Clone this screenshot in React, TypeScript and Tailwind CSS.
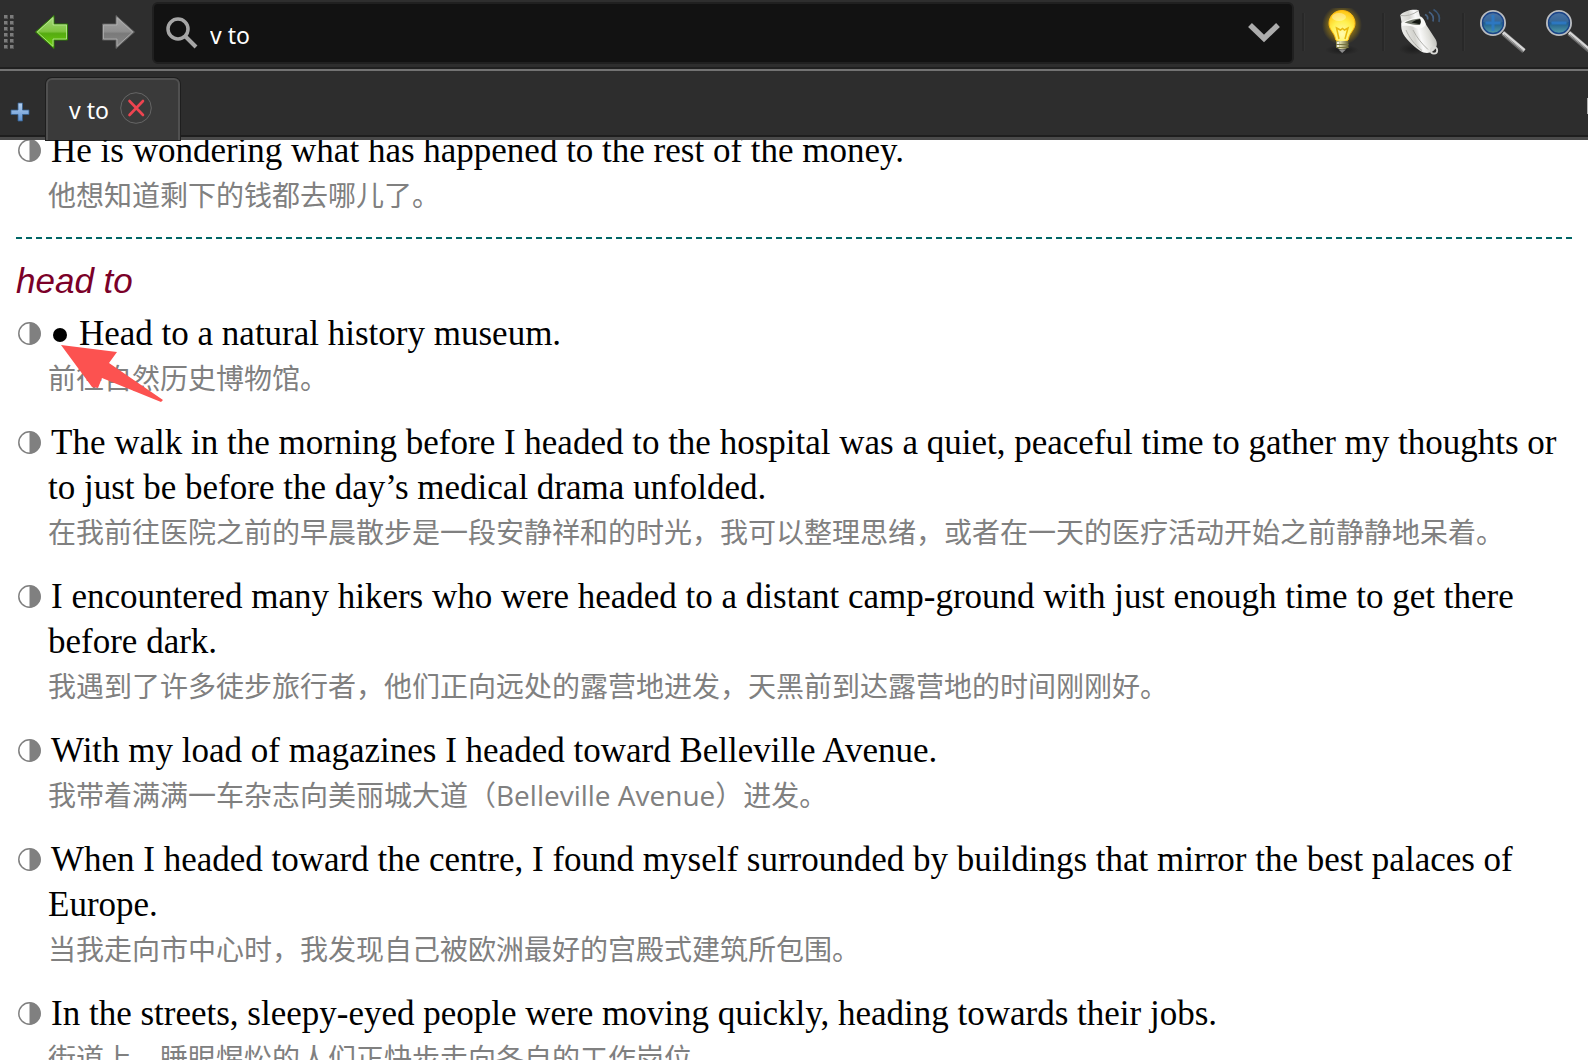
import React, { useState } from 'react';

interface Example {
  en: string;
  zh: string;
  marked?: boolean;
}

const previousExample: Example = {
  en: 'He is wondering what has happened to the rest of the money.',
  zh: '他想知道剩下的钱都去哪儿了。',
};

const examples: Example[] = [
  { en: 'Head to a natural history museum.', zh: '前往自然历史博物馆。', marked: true },
  {
    en: 'The walk in the morning before I headed to the hospital was a quiet, peaceful time to gather my thoughts or to just be before the day’s medical drama unfolded.',
    zh: '在我前往医院之前的早晨散步是一段安静祥和的时光，我可以整理思绪，或者在一天的医疗活动开始之前静静地呆着。',
  },
  {
    en: 'I encountered many hikers who were headed to a distant camp-ground with just enough time to get there before dark.',
    zh: '我遇到了许多徒步旅行者，他们正向远处的露营地进发，天黑前到达露营地的时间刚刚好。',
  },
  {
    en: 'With my load of magazines I headed toward Belleville Avenue.',
    zh: '我带着满满一车杂志向美丽城大道（Belleville Avenue）进发。',
  },
  {
    en: 'When I headed toward the centre, I found myself surrounded by buildings that mirror the best palaces of Europe.',
    zh: '当我走向市中心时，我发现自己被欧洲最好的宫殿式建筑所包围。',
  },
  {
    en: 'In the streets, sleepy-eyed people were moving quickly, heading towards their jobs.',
    zh: '街道上，睡眼惺忪的人们正快步走向各自的工作岗位。',
  },
];

// Toolbar handle: two columns of dots
const Grip: React.FC = () => (
  <div className="grid shrink-0 grid-cols-2 gap-[2px]">
    {Array.from({ length: 12 }, (_, i) => (
      <span key={i} className="h-1 w-1 border-r border-b border-[#555] bg-[#7c7c7c]" />
    ))}
  </div>
);

const ArrowIcon: React.FC<{ direction: 'back' | 'forward' }> = ({ direction }) => {
  const back = direction === 'back';
  const id = `arrow-${direction}`;
  return (
    <svg width="36" height="36" viewBox="0 0 36 36" className={back ? '' : '-scale-x-100'}>
      <defs>
        <linearGradient id={id} x1="0" y1="0" x2="0" y2="1">
          <stop offset="0" stopColor={back ? '#a9db80' : '#a6a6a6'} />
          <stop offset="0.48" stopColor={back ? '#7fc440' : '#8f8f8f'} />
          <stop offset="0.55" stopColor={back ? '#55ab10' : '#7a7a7a'} />
          <stop offset="1" stopColor={back ? '#6fd20c' : '#8a8a8a'} />
        </linearGradient>
      </defs>
      <path
        d="M1.5 18 20 1.5V10h13.500v16H20v8.500z"
        fill={`url(#${id})`}
        stroke={back ? '#2f7d06' : '#5c5c5c'}
        strokeWidth="1"
      />
      <path
        d="M3.300 18 19 3.700V11h13.500v14H19v7.300z"
        fill="none"
        stroke={back ? '#b9e695' : '#b0b0b0'}
        strokeOpacity="0.8"
        strokeWidth="1"
      />
    </svg>
  );
};

const SearchIcon: React.FC = () => (
  <svg width="32" height="32" viewBox="0 0 32 32" fill="none" stroke="#a6a6a6">
    <circle cx="12" cy="12" r="10" strokeWidth="3.500" />
    <path d="M19 19 30 30" strokeWidth="4" />
  </svg>
);

const ChevronIcon: React.FC = () => (
  <svg width="32" height="21" viewBox="0 0 32 21" fill="none" stroke="#acacac">
    <path d="M2 2 16 15.500 30 2" strokeWidth="5.500" />
  </svg>
);

const BulbIcon: React.FC = () => (
  <svg width="48" height="48" viewBox="0 0 48 48">
    <defs>
      <radialGradient id="bulb-glow">
        <stop offset="0.6" stopColor="#d8a800" stopOpacity="0.5" />
        <stop offset="1" stopColor="#d8a800" stopOpacity="0" />
      </radialGradient>
      <radialGradient id="bulb-shadow">
        <stop offset="0" stopColor="#161616" stopOpacity="0.8" />
        <stop offset="1" stopColor="#161616" stopOpacity="0" />
      </radialGradient>
      <radialGradient id="bulb-glass" cx="0.5" cy="0.75" r="0.75">
        <stop offset="0" stopColor="#fffbb0" />
        <stop offset="0.55" stopColor="#fff04e" />
        <stop offset="1" stopColor="#ffc414" />
      </radialGradient>
      <linearGradient id="bulb-base">
        <stop offset="0" stopColor="#8d8a4e" />
        <stop offset="0.35" stopColor="#dad7a8" />
        <stop offset="1" stopColor="#625f33" />
      </linearGradient>
    </defs>
    <ellipse cx="24" cy="42" rx="17" ry="5" fill="url(#bulb-shadow)" />
    <circle cx="24" cy="17" r="20" fill="url(#bulb-glow)" />
    <path
      d="M24 2.500c-7.700 0-13 5.800-13 13 0 6.500 5.500 9 6.500 15.500.3 2 2.500 2.500 6.500 2.500s6.200-.5 6.500-2.500C31.500 24.500 37 22 37 15.500c0-7.200-5.300-13-13-13z"
      fill="url(#bulb-glass)"
      stroke="#ffbc10"
      strokeWidth="1"
    />
    <ellipse cx="21" cy="9" rx="7" ry="4" fill="#fff" fillOpacity="0.35" />
    <path d="M21 31 18.500 20l4 2 2-1.500 2 1.500 3.500-2L27 31" fill="none" stroke="#e8b90c" strokeWidth="1.500" />
    <path d="M18 33h12.500v6.500q-6 4-12.500 0z" fill="url(#bulb-base)" />
    <path d="M18 36.500h12.500M18 39.500h12.500" stroke="#77743f" strokeWidth="1" />
    <path d="M20 34v6" stroke="#fff" strokeWidth="1.500" strokeDasharray="2 1" />
    <path d="M20.500 41.500h7.500l-3.800 3.500z" fill="#8c8c8c" />
  </svg>
);

const WhistleIcon: React.FC = () => (
  <svg width="48" height="48" viewBox="0 0 48 48">
    <defs>
      <linearGradient id="whistle-body" x1="0" y1="0.6" x2="1" y2="0.3">
        <stop offset="0" stopColor="#f4f4f2" />
        <stop offset="0.35" stopColor="#d3d3ce" />
        <stop offset="0.5" stopColor="#fafafa" />
        <stop offset="0.72" stopColor="#deded9" />
        <stop offset="1" stopColor="#a9a9a4" />
      </linearGradient>
      <radialGradient id="whistle-shadow">
        <stop offset="0" stopColor="#161616" stopOpacity="0.7" />
        <stop offset="1" stopColor="#161616" stopOpacity="0" />
      </radialGradient>
    </defs>
    <ellipse cx="15" cy="41" rx="14" ry="6" fill="url(#whistle-shadow)" />
    <path
      d="M2.300 7C6 3 15 .8 20.500 2.300l1.500 6c3.500 1.200 5 5 6.300 8.700l9.400 14.500c2.500 4.500.8 9.500-3.200 12-3.500 2-8.500 2-12.500-.8C14.500 37.500 6.500 30 4.200 23.500 3 20 3 16.500 3.500 14z"
      fill="url(#whistle-body)"
    />
    <path d="M3.500 15c5-3 13-5.500 18.500-6 3.500 1.500 5.500 4.500 5.500 8.500-3.500 3.500-8.500 4-12 1.200-3.500-1.200-7.500-1.200-11.500-.7z" fill="#fafaf8" />
    <path d="M2.500 7.500q9 1.500 18-4.800" fill="none" stroke="#b3b3ae" strokeWidth="1" />
    <path d="M6.500 14.500c4.500-2.300 10.500-3.800 15.500-4 1.200 1.700 1.200 4.500 0 6.300-4.500 1-9-.8-15.500-2.300z" fill="#70756a" />
    <path d="M13.500 14.500q4-3 8.500-3.500 1.500 3-.2 5.300z" fill="#161a14" />
    <path d="M8 22c3.500 8 8.500 14.500 16 20.500M15 22c3.500 7 8.500 13.500 15 19.500" fill="none" stroke="#b0b0ab" strokeWidth="1" />
    <circle cx="36" cy="42.500" r="3.200" fill="none" stroke="#d9d9d6" strokeWidth="1.800" />
    <g fill="none" strokeWidth="1.700">
      <path d="M27 6.500q3.500 1.500 2.500 5" stroke="#4a6482" />
      <path d="M31 4q5.500 3 4 9.500" stroke="#466183" />
      <path d="M35.500 1.500q7.500 4.500 5.500 12.500" stroke="#3a5472" />
    </g>
  </svg>
);

const ZoomIcon: React.FC<{ kind: 'in' | 'out' }> = ({ kind }) => (
  <svg width="48" height="48" viewBox="0 0 48 48" className="shrink-0">
    <defs>
      <linearGradient id={`lens-${kind}`} x1="0" y1="0" x2="0" y2="1">
        <stop offset="0" stopColor="#3b659c" />
        <stop offset="0.45" stopColor="#1f568c" />
        <stop offset="0.6" stopColor="#2c6c92" />
        <stop offset="1" stopColor="#5aa5ac" />
      </linearGradient>
    </defs>
    <path d="M25 25 46 43" stroke="#6a6a6a" strokeWidth="5" />
    <path d="M25 24.500 46.500 42.500" stroke="#d8d8d8" strokeWidth="3" />
    <path d="M26 26.500 45.500 43" stroke="#8b8b8b" strokeWidth="1" />
    <circle cx="15" cy="15" r="12" fill={`url(#lens-${kind})`} stroke="#b9bcc0" strokeWidth="2" />
    <circle cx="15" cy="15" r="10.500" fill="none" stroke="#1b4488" strokeWidth="1.300" />
    <path d="M5 14a10 9 0 0 1 20 0q-10 4-20 0z" fill="#fff" fillOpacity="0.1" />
    <path d={kind === 'in' ? 'M15 7v16M7.500 15h15' : 'M7.500 15h15'} stroke="#2a7bcb" strokeWidth="3" strokeOpacity="0.8" />
  </svg>
);

const PlusIcon: React.FC = () => (
  <svg width="20" height="20" viewBox="0 0 20 20">
    <defs>
      <linearGradient id="plus-fill" x1="0" y1="0" x2="0" y2="1">
        <stop offset="0" stopColor="#b5d0f0" />
        <stop offset="1" stopColor="#5e93d3" />
      </linearGradient>
    </defs>
    <path d="M8 1h4.500v7H19v4.500h-6.500V19H8v-6.500H1V8h7z" fill="url(#plus-fill)" stroke="#35608f" strokeWidth="0.8" />
  </svg>
);

const CloseIcon: React.FC = () => (
  <svg width="32" height="32" viewBox="0 0 32 32" fill="none">
    <circle cx="16" cy="16" r="15.300" stroke="#666" strokeWidth="1" />
    <path d="M9.500 9 23 23M23 9 9.500 23" stroke="#ee4450" strokeWidth="2.600" strokeLinecap="round" />
  </svg>
);

const HalfCircle: React.FC = () => (
  <svg width="23" height="23" viewBox="0 0 23 23" className="mr-[10px] ml-[2px] inline-block align-baseline">
    <circle cx="11.500" cy="11.500" r="10.700" fill="none" stroke="#808080" strokeWidth="1.500" />
    <path d="M11.500.5a11 11 0 0 1 0 22z" fill="#808080" />
  </svg>
);

const Separator: React.FC = () => <span className="h-[38px] w-[3px] shrink-0 border-r border-[#333] bg-[#282828]" />;

const ExampleItem: React.FC<{ example: Example }> = ({ example }) => (
  <li className="relative mb-[19px] pl-8">
    <p className="-indent-8 font-['Liberation_Serif',serif] text-[35px] leading-[45px] text-black">
      <HalfCircle />
      {example.marked && (
        <svg width="14" height="14" viewBox="0 0 14 14" className="mr-3 ml-[2px] inline-block align-[3px]">
          <circle cx="7" cy="7" r="7" />
        </svg>
      )}
      {example.en}
    </p>
    <p className="font-['Open_Sans','Noto_Sans_CJK_SC',sans-serif] text-[28px] leading-[45px] text-[#808080]">{example.zh}</p>
    {example.marked && (
      <svg width="102" height="58" viewBox="0 0 102 58" className="absolute top-[34px] left-[45px]">
        <path d="M0 0 56 7 48 18 102 55 100 57 41 33 37 43 31 42z" fill="#fc5250" />
      </svg>
    )}
  </li>
);

const App: React.FC = () => {
  const [query, setQuery] = useState('v to');

  return (
    <div className="flex h-screen flex-col overflow-hidden bg-white font-['Noto_Sans',sans-serif]">
      {/* Toolbar */}
      <header className="flex h-[71px] shrink-0 items-start overflow-hidden border-b-2 border-[#737373] bg-[#2e2e2e] pl-1 shadow-[inset_0_-2px_0_#202020]">
        <div className="flex h-16 shrink-0 items-center">
          <Grip />
          <button aria-label="Back" className="ml-5">
            <ArrowIcon direction="back" />
          </button>
          <button aria-label="Forward" className="ml-[30px]">
            <ArrowIcon direction="forward" />
          </button>
        </div>
        <div className="mt-[2px] ml-4 flex h-[62px] min-w-0 flex-1 items-center rounded-md border-2 border-[#202020] bg-[#121212] pr-3 pl-3">
          <SearchIcon />
          <input
            aria-label="Search"
            value={query}
            onChange={e => setQuery(e.target.value)}
            className="ml-3 h-full min-w-0 flex-1 bg-transparent pt-1 text-[23px] text-white outline-none"
          />
          <button aria-label="Show matches">
            <ChevronIcon />
          </button>
        </div>
        <div className="flex h-16 w-[294px] shrink-0 items-center overflow-hidden pl-2">
          <Separator />
          <button aria-label="Suggestions" className="mr-4 ml-[13px] shrink-0">
            <BulbIcon />
          </button>
          <Separator />
          <button aria-label="Pronounce" className="mr-4 ml-[13px] shrink-0">
            <WhistleIcon />
          </button>
          <Separator />
          <button aria-label="Zoom in" className="mr-[18px] ml-[13px] shrink-0">
            <ZoomIcon kind="in" />
          </button>
          <button aria-label="Zoom out" className="shrink-0">
            <ZoomIcon kind="out" />
          </button>
        </div>
      </header>

      {/* Tabs */}
      <nav className="flex h-[69px] shrink-0 items-end border-b-[3px] border-[#4a4a4a] bg-[#2d2d2d] shadow-[inset_0_-2px_0_#1e1e1e]">
        <button aria-label="New tab" className="mr-4 mb-[15px] ml-[10px]">
          <PlusIcon />
        </button>
        <div className="-mb-[3px] flex h-[62px] items-center rounded-t-md border-2 border-b-0 border-[#505050] bg-[#3a3a3a] pr-[26px] pb-1 pl-[21px] shadow-[0_0_0_1px_#1e1e1e]">
          <button className="pt-1 text-[23px] text-white">v to</button>
          <button aria-label="Close tab" className="ml-[11px]">
            <CloseIcon />
          </button>
        </div>
        <button aria-label="Tab list" className="mb-[23px] ml-auto h-4 w-px bg-[#b0b0b0]" />
      </nav>

      {/* Article, scrolled part of the way down */}
      <main className="min-h-0 flex-1 overflow-hidden px-4">
        <ul className="-mt-3">
          <ExampleItem example={previousExample} />
        </ul>
        <hr className="border-t-2 border-dashed border-[#006666]" />
        <h2 className="mt-[19px] mb-2 font-['Liberation_Sans',sans-serif] text-[35px] leading-[45px] text-[#7b0028] italic">
          head to
        </h2>
        <ul>
          {examples.map(example => (
            <ExampleItem key={example.en} example={example} />
          ))}
        </ul>
      </main>
    </div>
  );
};

export default App;
